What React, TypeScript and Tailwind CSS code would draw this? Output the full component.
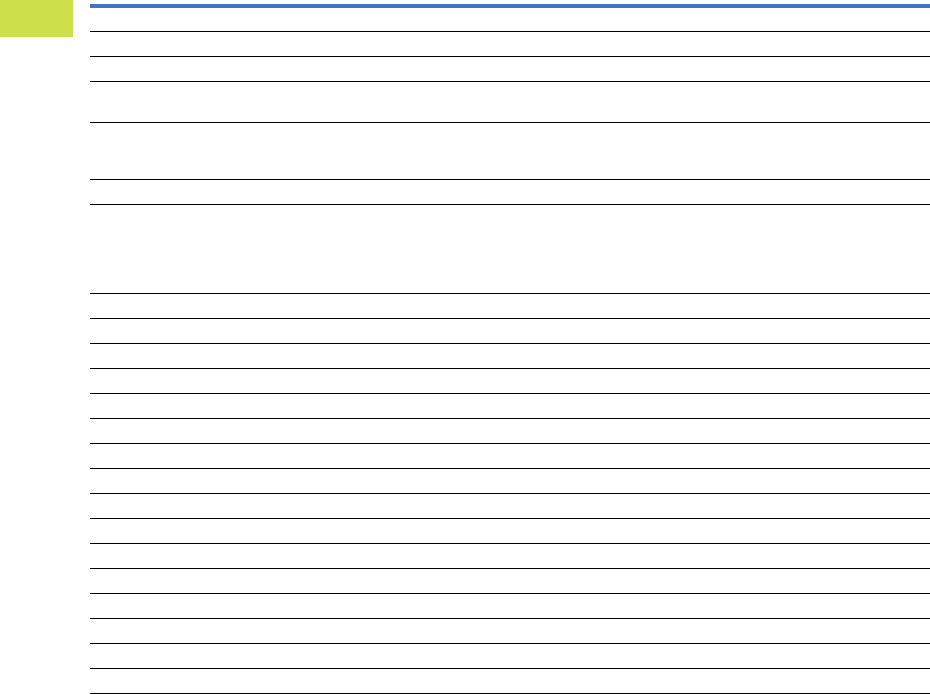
const rows = [
  "h-[23px]",
  "h-[24px]",
  "h-[24px]",
  "h-[40px]",
  "h-[56px]",
  "h-[24px]",
  "h-[88px]",
  ...Array(16).fill("h-[24px]"),
];

export default function App() {
  return (
    <div className="flex bg-white w-[930px] h-[694px] overflow-hidden">
      {/* Left tab marker */}
      <div className="w-[73px] h-[37px] shrink-0 bg-[#cde04a]" />

      {/* Blank ruled table */}
      <div className="flex-1 ml-[17px] pt-[4px]">
        <div className="border-t-4 border-[#4472c4]">
          {rows.map((h, i) => (
            <div key={i} className={`${h} box-content border-b border-black`} />
          ))}
        </div>
      </div>
    </div>
  );
}
